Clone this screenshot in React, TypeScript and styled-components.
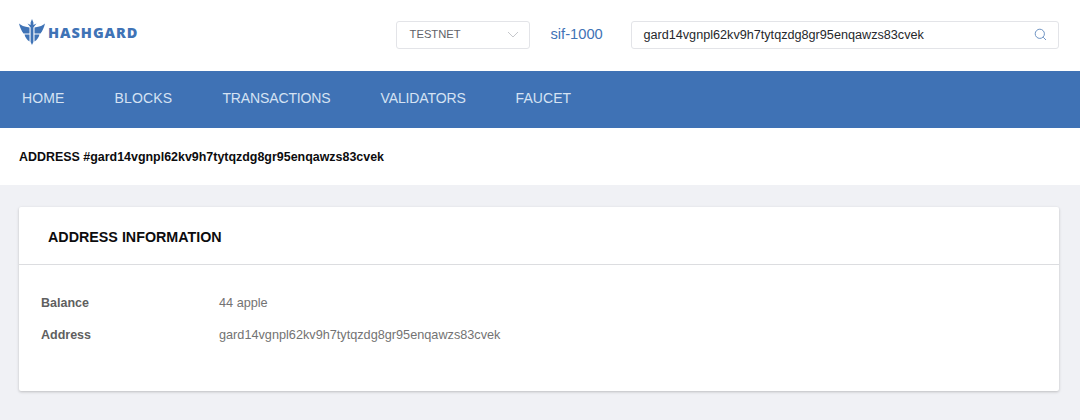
import React from "react";
import styled, { createGlobalStyle } from "styled-components";

const Global = createGlobalStyle`
  html, body { margin: 0; padding: 0; background: #f0f1f5; }
  body { font-family: "Liberation Sans", Arial, sans-serif; width: 1080px; height: 420px; overflow: hidden; }
  * { box-sizing: border-box; }
`;

const Header = styled.header`
  height: 71px;
  background: #fff;
  display: flex;
  align-items: center;
  padding: 0 21px 1px 19px;
`;
const Logo = styled.div`
  display: flex;
  align-items: center;
  gap: 3px;
  width: 377px;
  margin-bottom: 6px;
  color: #3f73b6;
`;
const LogoText = styled.span`
  font-family: "Open Sans", "Liberation Sans", sans-serif;
  font-weight: 800;
  font-size: 14.5px;
  letter-spacing: 0.95px;
`;
const Select = styled.div`
  width: 134px;
  height: 28px;
  border: 1px solid #e3e4e8;
  border-radius: 3px;
  display: flex;
  align-items: center;
  justify-content: space-between;
  padding: 0 10px 2px 13px;
  font-size: 11.2px;
  color: #5f6268;
`;
const Network = styled.a`
  margin-left: 21px;
  margin-bottom: 3px;
  width: 81px;
  font-size: 14.7px;
  color: #3f73b6;
`;
const Search = styled.div`
  width: 428px;
  height: 28px;
  border: 1px solid #e3e4e8;
  border-radius: 3px;
  display: flex;
  align-items: center;
  justify-content: space-between;
  padding: 0 11px 1px;
  font-size: 12.65px;
  color: #26282c;
`;
const Nav = styled.nav`
  height: 57px;
  background: #3f72b5;
  display: flex;
  align-items: center;
  gap: 50px;
  padding: 0 22px 4px;
`;
const NavItem = styled.a<{ $track: number }>`
  font-size: 14px;
  letter-spacing: ${(p) => p.$track}px;
  color: #d5e2f3;
`;
const TitleBar = styled.div`
  height: 57px;
  background: #fff;
  display: flex;
  align-items: center;
  padding: 0 19px;
  font-size: 12.45px;
  font-weight: 700;
  color: #0c0c0e;
`;
const Main = styled.main`
  padding: 22px 21px 0 19px;
`;
const Card = styled.section`
  height: 184px;
  background: #fff;
  border-radius: 2px;
  box-shadow: 0 1px 3px rgba(0, 0, 0, 0.22);
`;
const CardTitle = styled.h2`
  margin: 0;
  height: 58px;
  display: flex;
  align-items: center;
  padding: 2px 29px 0;
  border-bottom: 1px solid #dcdde0;
  font-size: 14.3px;
  font-weight: 700;
  color: #0c0c0e;
`;
const Rows = styled.div`
  padding: 30px 22px 0;
  display: flex;
  flex-direction: column;
  gap: 16px;
`;
const Row = styled.div`
  display: flex;
  height: 16px;
  align-items: center;
  font-size: 12.7px;
  color: #737373;
`;
const Label = styled.span`
  width: 178px;
  font-size: 12.5px;
  font-weight: 700;
  color: #5f5f5f;
`;

const navItems: [string, number][] = [
  ["HOME", 0.1],
  ["BLOCKS", 0.2],
  ["TRANSACTIONS", -0.13],
  ["VALIDATORS", -0.13],
  ["FAUCET", 0.05],
];

export default function App() {
  return (
    <>
      <Global />
      <Header>
        <Logo>
          <svg width="26" height="26" viewBox="0 0 26 26" fill="#3f73b6">
            <path d="M0 4.5 C2 6.5 5 7.5 10.5 8.5 L10.5 14.5 L4.5 14.5 C2.5 12 1 8.5 0 4.5 Z" />
            <path d="M26 4.5 C24 6.5 21 7.5 15.5 8.5 L15.5 14.5 L21.5 14.5 C23.5 12 25 8.5 26 4.5 Z" />
            <path d="M5.5 15.5 L10.5 15.5 L10.5 22.5 C8 21 6.3 18.5 5.5 15.5 Z" />
            <path d="M20.5 15.5 L15.5 15.5 L15.5 22.5 C18 21 19.7 18.5 20.5 15.5 Z" />
            <path d="M13 0 L14.4 3.5 L14.4 6 L17.5 4.5 L14.4 8.5 L14.4 23 L13 26 L11.6 23 L11.6 8.5 L8.5 4.5 L11.6 6 L11.6 3.5 Z" />
          </svg>
          <LogoText>HASHGARD</LogoText>
        </Logo>
        <Select>
          TESTNET
          <svg width="12" height="12" viewBox="0 0 12 12" fill="none" stroke="#c6c8cc" strokeWidth="1">
            <path d="M1 4 L6 9 L11 4" />
          </svg>
        </Select>
        <Network>sif-1000</Network>
        <Search>
          gard14vgnpl62kv9h7tytqzdg8gr95enqawzs83cvek
          <svg width="13" height="13" viewBox="0 0 13 13" fill="none" stroke="#6f94c4" strokeWidth="1">
            <circle cx="5.8" cy="5.8" r="4.6" />
            <path d="M9.2 9.2 L12 12" />
          </svg>
        </Search>
      </Header>
      <Nav>
        {navItems.map(([name, track]) => (
          <NavItem key={name} $track={track}>{name}</NavItem>
        ))}
      </Nav>
      <TitleBar>ADDRESS #gard14vgnpl62kv9h7tytqzdg8gr95enqawzs83cvek</TitleBar>
      <Main>
        <Card>
          <CardTitle>ADDRESS INFORMATION</CardTitle>
          <Rows>
            <Row><Label>Balance</Label>44 apple</Row>
            <Row><Label>Address</Label>gard14vgnpl62kv9h7tytqzdg8gr95enqawzs83cvek</Row>
          </Rows>
        </Card>
      </Main>
    </>
  );
}
